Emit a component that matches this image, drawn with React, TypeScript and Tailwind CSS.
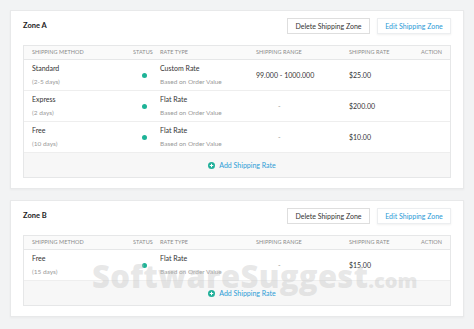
import React from "react";

type Rate = {
  method: string;
  days: string;
  rateType: string;
  range: string;
  price: string;
};

type Zone = {
  name: string;
  rates: Rate[];
};

const zones: Zone[] = [
  {
    name: "Zone A",
    rates: [
      { method: "Standard", days: "(2-5 days)", rateType: "Custom Rate", range: "99.000 - 1000.000", price: "$25.00" },
      { method: "Express", days: "(2 days)", rateType: "Flat Rate", range: "-", price: "$200.00" },
      { method: "Free", days: "(10 days)", rateType: "Flat Rate", range: "-", price: "$10.00" },
    ],
  },
  {
    name: "Zone B",
    rates: [{ method: "Free", days: "(15 days)", rateType: "Flat Rate", range: "-", price: "$15.00" }],
  },
];

const cols = "grid grid-cols-[101px_27px_96px_93px_1fr_auto] px-2";

function ZoneCard({ zone }: { zone: Zone }) {
  return (
    <div className="bg-white border border-[#e8e9ea] shadow-[0_1px_2px_rgba(0,0,0,0.04)] px-3 pt-[7px] pb-[10px]">
      <div className="flex items-center justify-between h-4">
        <h3 className="text-[7.5px] font-bold text-[#222]">{zone.name}</h3>
        <div className="flex gap-[7px]">
          <button className="h-4 w-[83px] border border-[#dedede] bg-white text-[7px] text-[#333]">
            Delete Shipping Zone
          </button>
          <button className="h-4 w-[74px] border border-[#eceef0] bg-white text-[7px] text-[#2b9ad6] shadow-[0_1px_2px_rgba(0,0,0,0.06)]">
            Edit Shipping Zone
          </button>
        </div>
      </div>

      <div className="mt-[11px] border border-[#e6e7e8]">
        <div className={`${cols} h-[14px] items-center bg-[#fafafa] border-b border-[#e6e7e8] text-[5.5px] uppercase text-[#8a8a8a] tracking-[0.01em]`}>
          <span>Shipping Method</span>
          <span>Status</span>
          <span>Rate Type</span>
          <span>Shipping Range</span>
          <span>Shipping Rate</span>
          <span className="text-right">Action</span>
        </div>
        {zone.rates.map((r, i) => (
          <div
            key={i}
            className={`${cols} h-[31px] items-center bg-white border-b border-[#eeeeee] text-[7px] text-[#333]`}
          >
            <div className="flex flex-col gap-[3px]">
              <span>{r.method}</span>
              <span className="text-[6.5px] text-[#999]">{r.days}</span>
            </div>
            <div className="pl-[9px]">
              <svg width="5" height="5" viewBox="0 0 10 10" className="block">
                <circle cx="5" cy="5" r="5" fill="#1db397" />
              </svg>
            </div>
            <div className="flex flex-col gap-[3px]">
              <span>{r.rateType}</span>
              <span className="text-[6.5px] text-[#999]">Based on Order Value</span>
            </div>
            <span className={r.range === "-" ? "pl-[22px] text-[#999]" : ""}>{r.range}</span>
            <span>{r.price}</span>
            <span />
          </div>
        ))}
        <div className="h-[24px] bg-[#f7f7f7] flex items-center justify-center pl-[10px]">
          <span className="flex items-center gap-[4px] text-[7px] text-[#2d9dd6]">
            <svg width="7" height="7" viewBox="0 0 14 14">
              <circle cx="7" cy="7" r="7" fill="#22b09a" />
              <path d="M7 3.5v7M3.5 7h7" stroke="#fff" strokeWidth="2" />
            </svg>
            Add Shipping Rate
          </span>
        </div>
      </div>
    </div>
  );
}

export default function App() {
  return (
    <div
      className="relative w-[474px] h-[329px] overflow-hidden bg-[#f2f3f4] px-[10px] pt-[10px] flex flex-col gap-[11px]"
      style={{ fontFamily: "Lato, 'Open Sans', sans-serif" }}
    >
      {zones.map((z) => (
        <ZoneCard key={z.name} zone={z} />
      ))}
      {/* watermark */}
      <div
        className="absolute left-[92px] top-[253px] flex items-baseline text-[#c4c4c4]/40 font-black pointer-events-none"
        style={{ fontFamily: "'Open Sans', Lato, sans-serif" }}
      >
        <span className="text-[31px] tracking-[0.01em]">SoftwareSuggest</span>
        <span className="text-[20px]">.com</span>
      </div>
    </div>
  );
}
